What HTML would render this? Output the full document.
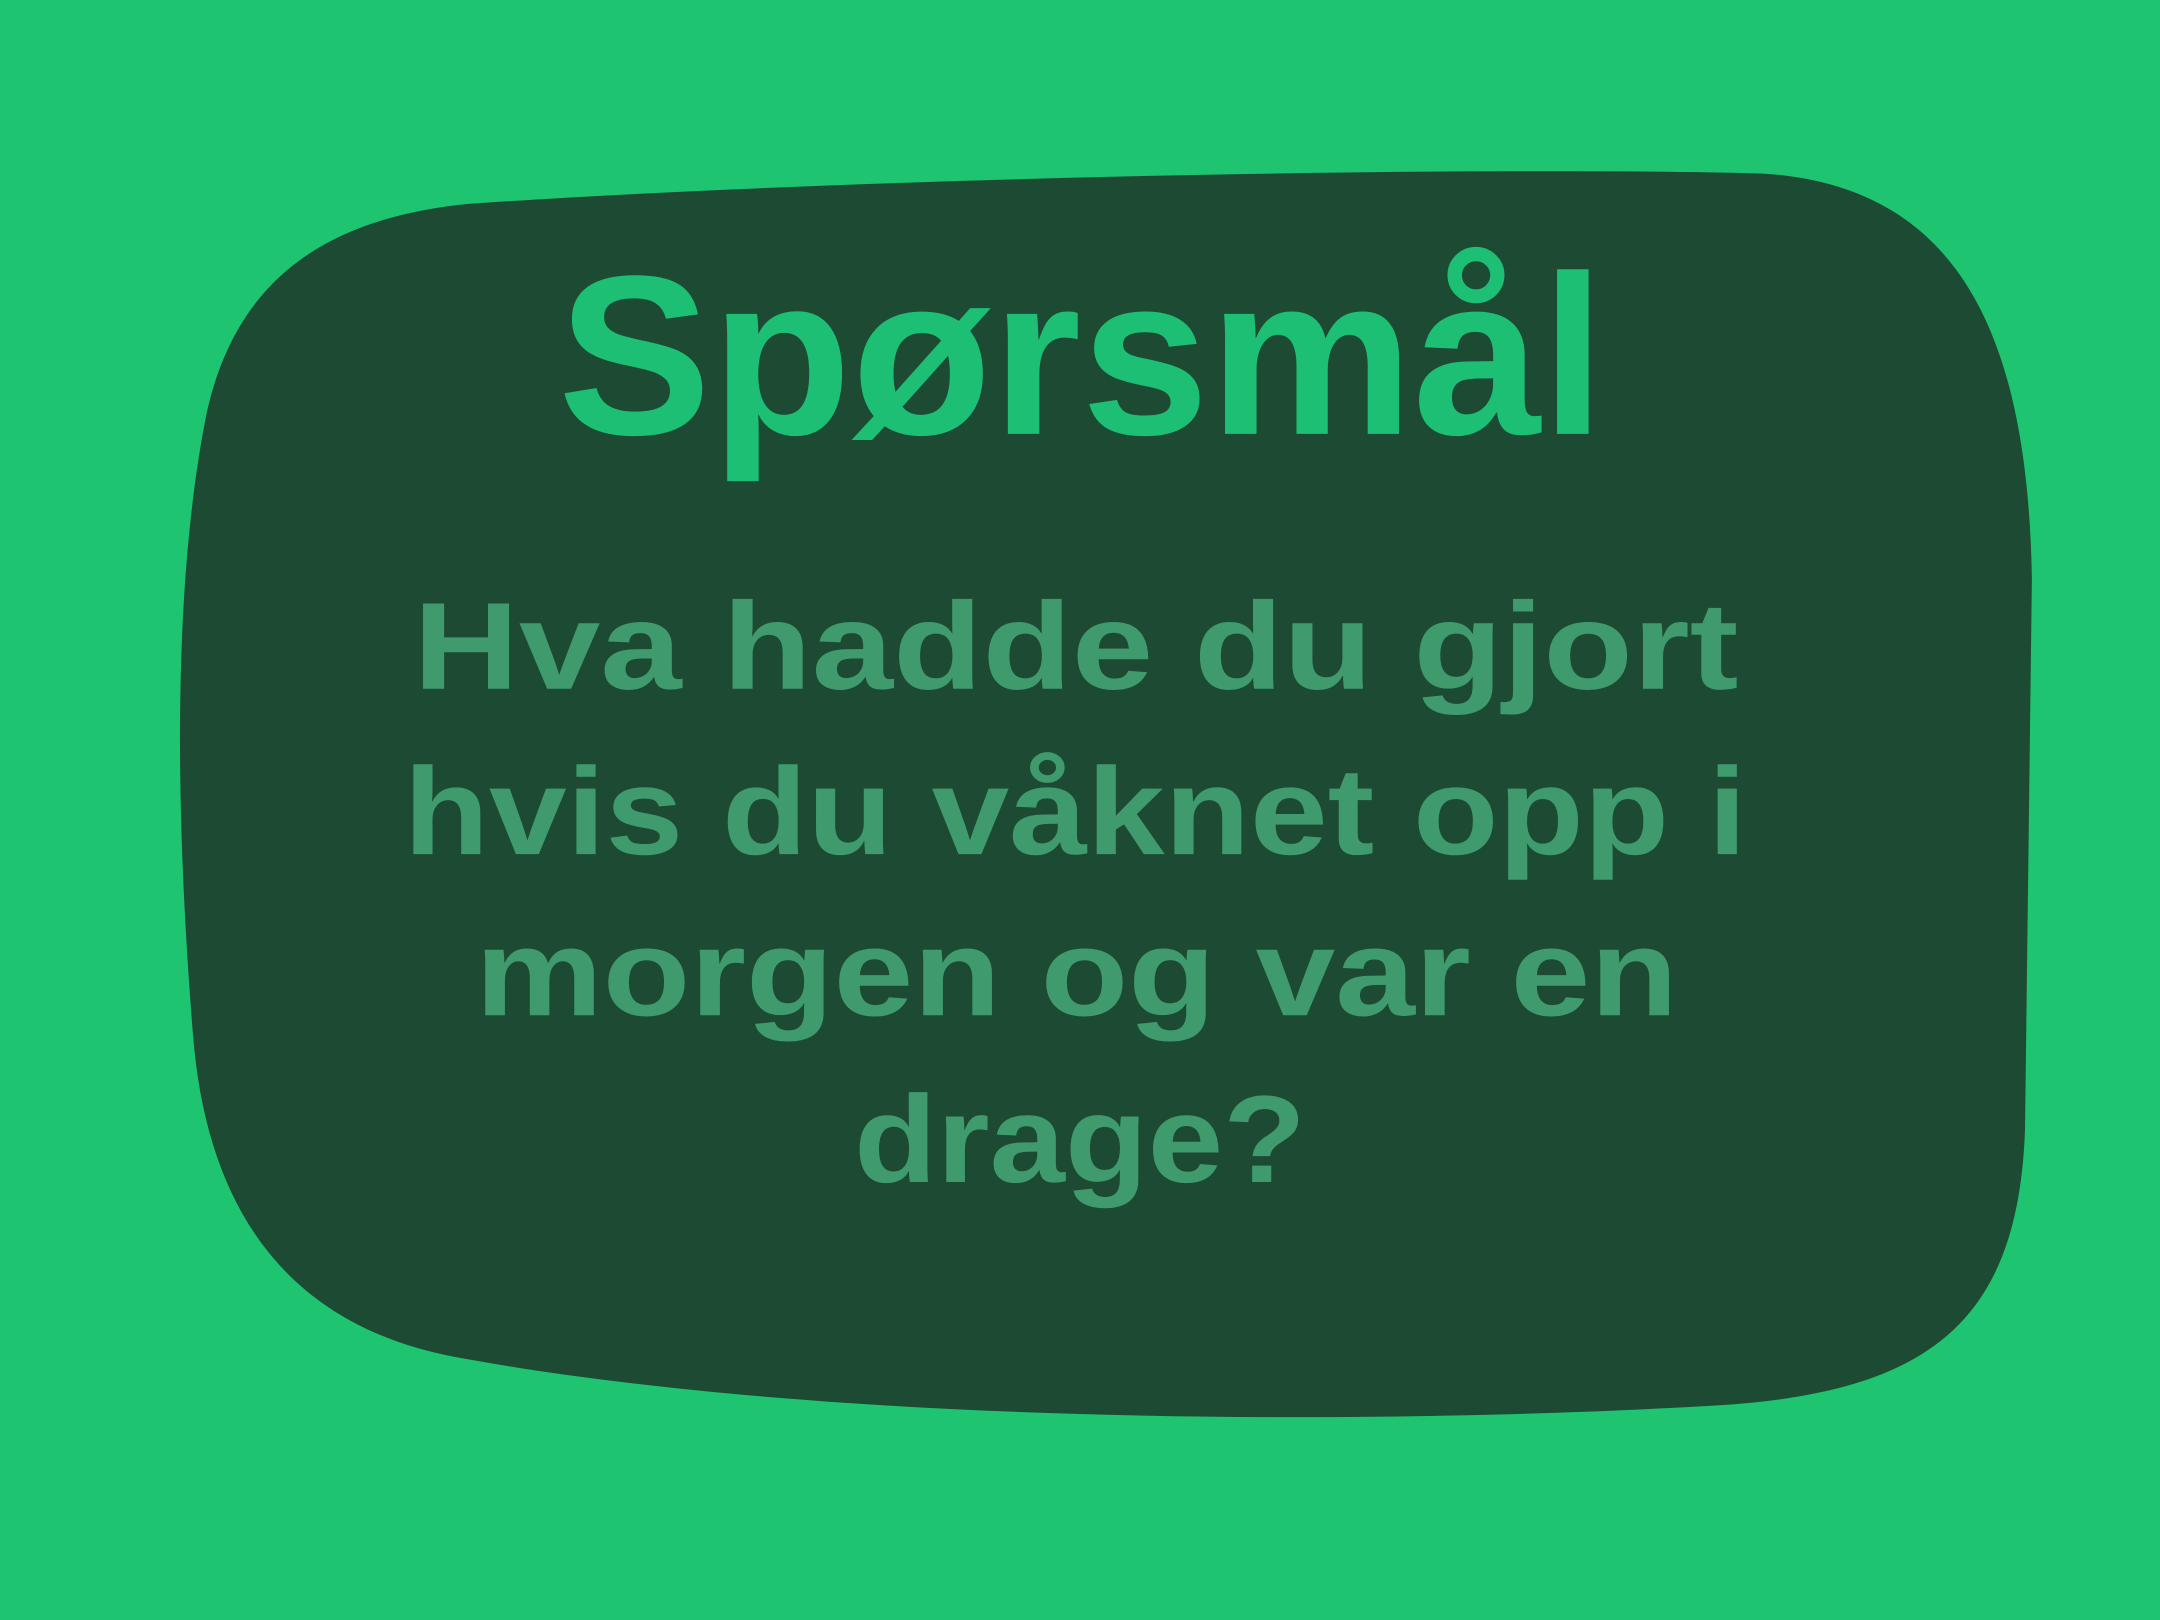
<!DOCTYPE html>
<html><head><meta charset="utf-8"><style>
html,body{margin:0;padding:0;background:#1ec46f;}
svg{display:block;}
</style></head><body>
<svg width="2160" height="1620" viewBox="0 0 1568 1176" preserveAspectRatio="none" xmlns="http://www.w3.org/2000/svg">
<rect width="1568" height="1176" fill="#1ec46f"/>
<path d="M 340 148 C 600 130, 1050 120, 1280 126 C 1420 135, 1472 240, 1475 420 L 1470 820 C 1465 960, 1400 1010, 1250 1020 C 1000 1035, 600 1035, 330 985 C 210 962, 150 880, 140 750 C 128 600, 124 430, 150 300 C 172 200, 240 158, 340 148 Z" fill="#1d4a33"/>
<g font-family="'Liberation Sans', sans-serif" font-weight="bold" text-anchor="start">
<text x="405" y="315" font-size="165" fill="#1cbf74" textLength="760" lengthAdjust="spacingAndGlyphs">Spørsmål</text>
<g fill="#3f9a6e" font-size="90">
<text x="300" y="500" textLength="962" lengthAdjust="spacingAndGlyphs">Hva hadde du gjort</text>
<text x="293" y="620" textLength="975" lengthAdjust="spacingAndGlyphs">hvis du våknet opp i</text>
<text x="345" y="737" textLength="873" lengthAdjust="spacingAndGlyphs">morgen og var en</text>
<text x="620" y="858" textLength="328" lengthAdjust="spacingAndGlyphs">drage?</text>
</g>
</g>
</svg>
</body></html>
